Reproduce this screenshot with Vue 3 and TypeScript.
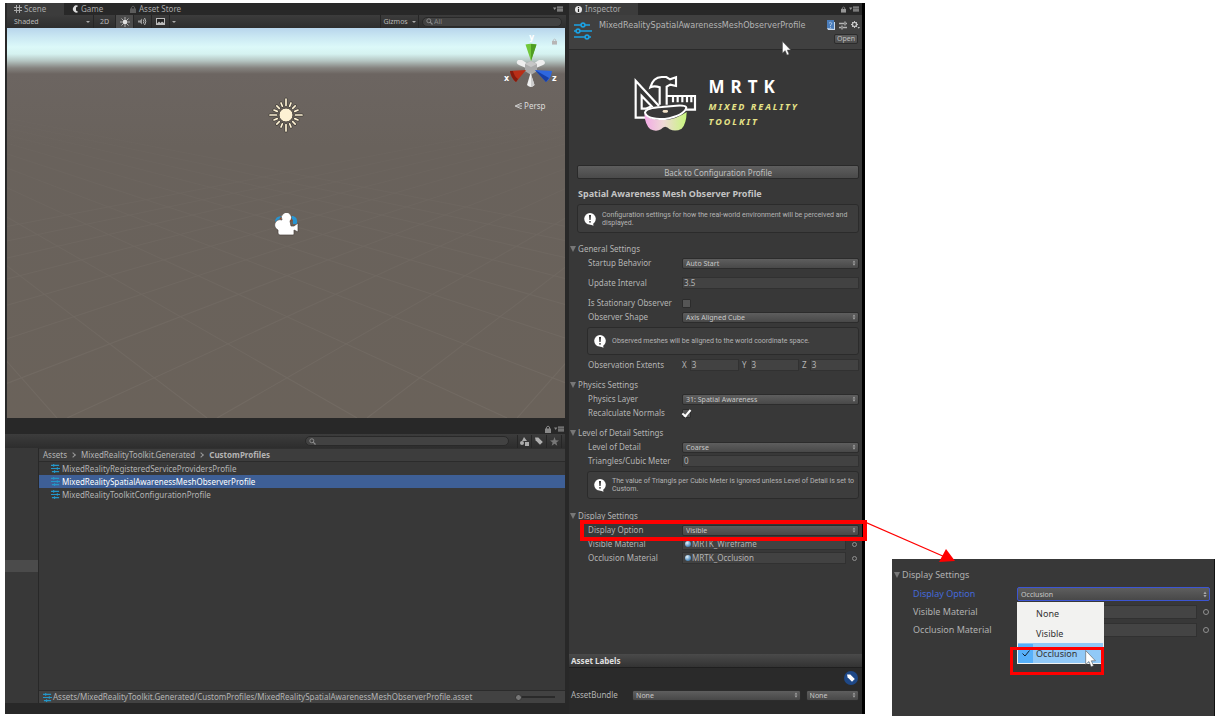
<script setup lang="ts">
import { ref } from 'vue'

const assets = [
  'MixedRealityRegisteredServiceProvidersProfile',
  'MixedRealitySpatialAwarenessMeshObserverProfile',
  'MixedRealityToolkitConfigurationProfile'
]
const selectedAsset = ref(1)
const displayOptions = ['None', 'Visible', 'Occlusion']
const displayOption = ref('Visible')
const popupOption = ref('Occlusion')
const axes = ['X', 'Y', 'Z']

interface Line { x1: number; y1: number; x2: number; y2: number }
const gridLines: Line[] = []
for (let i = 0; i < 12; i++) {
  gridLines.push({ x1: -260, y1: 40, x2: -100 + i * 150, y2: 390 })
  gridLines.push({ x1: 820, y1: 40, x2: 660 - i * 150, y2: 390 })
}
const rays = Array.from({ length: 16 }, (_, i) => ({ angle: i * 22.5, end: i % 4 === 0 ? 16 : 13 }))
</script>

<template>
  <div class="page">
    <svg class="defs" aria-hidden="true">
      <symbol id="profile" viewBox="0 0 18 18">
        <g fill="none" stroke="#1ba1e2" stroke-width="1.6">
          <path d="M0 3H7M11 3H16M0 9H2M6 9H18M0 15H11M15 15H17" />
          <circle cx="9" cy="3" r="1.9" /><circle cx="4" cy="9" r="1.9" /><circle cx="13" cy="15" r="1.9" />
        </g>
      </symbol>
      <symbol id="sliders" viewBox="0 0 10 10">
        <path d="M0 1.5H9M0 5H10M1 8.5H9M3 0V3M7 3.5V6.5M4 7V10" stroke="#2497c9" stroke-width="1.2" />
      </symbol>
      <symbol id="updown" viewBox="0 0 4 8">
        <path d="M2 .5L3.8 3.3H.2ZM2 7.5L3.8 4.7H.2Z" fill="#a8a8a8" />
      </symbol>
      <symbol id="lock" viewBox="0 0 6 8">
        <path d="M1.5 4V2.2Q3 0 4.5 2V4" fill="none" stroke="currentColor" />
        <path d="M0 3.5H6V8H0Z" fill="currentColor" />
      </symbol>
      <symbol id="panemenu" viewBox="0 0 10 6">
        <path d="M0 1.5H3.4L1.7 4ZM4 .5H10V1.8H4ZM4 2.4H10V3.7H4ZM4 4.3H10V5.6H4Z" fill="currentColor" />
      </symbol>
      <symbol id="note" viewBox="0 0 14 14">
        <path d="M6 12L10.5 13.8 10 11Z" fill="#fff" />
        <circle cx="7" cy="6.8" r="5.8" fill="#fff" />
        <path d="M6 3H8L7.6 8H6.4Z" fill="#333" /><circle cx="7" cy="9.8" r=".9" fill="#333" />
      </symbol>
      <symbol id="pointer" viewBox="0 0 9 15">
        <path d="M.5 .5V12L3.2 9.6 5 14 7 13.2 5.2 9H8.6Z" fill="#fff" stroke="#555" stroke-width=".5" />
      </symbol>
      <symbol id="magnifier" viewBox="0 0 7 7">
        <circle cx="2.8" cy="2.8" r="2" fill="none" stroke="#8c8c8c" /><path d="M4.2 4.2L6.5 6.5" stroke="#8c8c8c" stroke-width="1.2" />
      </symbol>
      <symbol id="tag" viewBox="0 0 8 8">
        <path d="M0 .5L.6 3.2 5 7.8 7.8 5 3.3 .5Z" fill="currentColor" />
      </symbol>
    </svg>

    <main class="editor">
      <div class="left">
        <section class="scene">
          <nav class="tabs">
            <button class="tab active scene-tab"><svg width="8" height="8" viewBox="0 0 8 8"><path d="M2.5 0V8M5.5 0V8M0 2.5H8M0 5.5H8" stroke="#aaa" /></svg>Scene</button>
            <button class="tab game-tab"><svg width="7" height="8" viewBox="0 0 7 8"><path d="M6.2 1A3.4 3.6 0 1 0 6.2 7L4 5.4V2.6Z" fill="#ddd" /></svg>Game</button>
            <button class="tab"><svg class="dim" width="6" height="8"><use href="#lock" /></svg>Asset Store</button>
            <svg class="pane-menu" width="10" height="6"><use href="#panemenu" /></svg>
          </nav>
          <div class="toolbar">
            <button class="tool shade"><span>Shaded</span><i class="caret"></i></button>
            <button class="tool">2D</button>
            <button class="tool on" aria-label="Scene lighting"><svg width="10" height="10" viewBox="0 0 10 10"><circle cx="5" cy="5" r="2" fill="#fff" /><path d="M5 0V10M0 5H10M1.5 1.5L8.5 8.5M8.5 1.5L1.5 8.5" stroke="#ddd" stroke-width=".7" /></svg></button>
            <button class="tool" aria-label="Scene audio"><svg width="9" height="9" viewBox="0 0 9 9"><path d="M0 3.5H2L4 1.5V7.5L2 5.5H0Z" fill="#999" /><path d="M5.3 2.5Q6.5 4.5 5.3 6.5M6.6 1Q9 4.5 6.6 8" fill="none" stroke="#bbb" /></svg></button>
            <button class="tool" aria-label="Effects"><svg width="9" height="7" viewBox="0 0 9 7"><path d="M0 0H9V7H0Z" fill="#bbb" /><path d="M1 1H8V5L6 3.5 4.5 5 3 3.5 1 5.5Z" fill="#222" /></svg></button>
            <button class="tool slim" aria-label="Effects menu"><i class="caret"></i></button>
            <span class="grow"></span>
            <button class="tool gizmos">Gizmos<i class="caret"></i></button>
            <label class="search scene-search"><svg width="7" height="7"><use href="#magnifier" /></svg><input value="All" aria-label="Search scene" /></label>
          </div>
          <div class="viewport">
            <svg class="ground" viewBox="0 0 558 390" preserveAspectRatio="none">
              <defs><linearGradient id="fade" x1="0" y1="0" x2="0" y2="1"><stop offset=".12" stop-color="#000" /><stop offset=".5" stop-color="#888" /><stop offset="1" stop-color="#fff" /></linearGradient>
                <mask id="horizon"><rect width="558" height="390" fill="url(#fade)" /></mask></defs>
              <g mask="url(#horizon)" stroke="#a29b94" stroke-width="1" opacity=".14">
                <line v-for="(l, i) in gridLines" :key="i" :x1="l.x1" :y1="l.y1" :x2="l.x2" :y2="l.y2" />
              </g>
            </svg>
            <svg class="sun" width="36" height="38" viewBox="-18 -19 36 38">
              <g v-for="r in rays" :key="r.angle" :transform="`rotate(${r.angle})`">
                <path :d="`M0 -9.5V${-r.end}`" stroke="#3e3a34" stroke-width="3" stroke-linecap="round" />
                <path :d="`M0 -9.5V${-r.end}`" stroke="#fdf1d3" stroke-width="1.7" stroke-linecap="round" />
              </g>
              <circle r="7" fill="#fdf1d3" stroke="#47413a" />
            </svg>
            <svg class="camera" width="28" height="24" viewBox="0 0 28 24">
              <path d="M3 9Q3 3 10 3H21Q26 4 25 11H21V7H8Z" fill="#2795d2" />
              <path d="M8 5L12 8M20 6L17 9" stroke="#a5451b" stroke-width="2" />
              <path d="M10 7A5 5 0 1 1 18 8L19 13H22L26 10V19L22 17V21Q22 22 21 22H8Q6 22 6 20V17A5 5 0 1 1 10 7Z" fill="#fff" stroke="#4b443e" stroke-width=".7" />
            </svg>
            <div class="gizmo">
              <svg width="56" height="60" viewBox="0 0 56 60">
                <path d="M15 28Q12 31 16 33L23 36 25 32 19 28Z" fill="#eee" /><path d="M40 28Q44 31 40 33L33 36 30 32 36 28Z" fill="#eee" />
                <path d="M22 32L28 29 34 32V39L28 43 22 39Z" fill="#aaa" /><path d="M22 32L28 35 34 32 28 29Z" fill="#c6c6c6" />
                <path d="M22.5 12.5Q28 11 33.5 12.5L28 29Z" fill="#72c83a" /><path d="M28 12V29L33.5 12.5Z" fill="#4f9d22" />
                <path d="M7 39L23 38 13 50Q8 46 7 39Z" fill="#b92e17" /><path d="M7 39Q8 46 13 50L15 47Q11 44 10 39Z" fill="#861b0d" />
                <path d="M32 38L49 39Q48 47 43 50Z" fill="#2e67df" /><path d="M32 38L46 46 43 50Z" fill="#173fa7" />
                <path d="M27.5 41L24 53Q28 57 31.5 53Z" fill="#eee" /><path d="M28 42V55L31.5 53Z" fill="#ccc" />
                <text x="26" y="8">y</text><text x="1" y="49">x</text><text x="49" y="49">z</text>
              </svg>
              <button class="persp"><svg width="7" height="6" viewBox="0 0 7 6"><path d="M7 0L0 3 7 6M1 3H7" fill="none" stroke="#ccc" /></svg>Persp</button>
            </div>
            <svg class="view-lock" width="5" height="7" viewBox="0 0 6 8"><use href="#lock" /></svg>
          </div>
        </section>

        <section class="project">
          <div class="pane-icons">
            <svg width="6" height="8"><use href="#lock" /></svg><svg width="10" height="6"><use href="#panemenu" /></svg>
          </div>
          <div class="toolbar project-toolbar">
            <span class="grow"></span>
            <label class="search project-search"><svg width="7" height="7"><use href="#magnifier" /></svg><input aria-label="Search project" /></label>
            <button class="tool first" aria-label="Search by type"><svg width="9" height="9" viewBox="0 0 9 9"><path d="M4 0L7 4H2Z" fill="#aaa" /><circle cx="2" cy="6" r="2" fill="#aaa" /><path d="M5 5H9V9H5Z" fill="#aaa" /></svg></button>
            <button class="tool" aria-label="Search by label"><svg class="lite" width="8" height="8"><use href="#tag" /></svg></button>
            <button class="tool" aria-label="Favorites"><svg width="9" height="9" viewBox="0 0 10 10"><path d="M5 0L6.3 3.6 10 3.8 7.1 6 8.1 9.7 5 7.6 1.9 9.7 2.9 6 0 3.8 3.7 3.6Z" fill="#777" /></svg></button>
          </div>
          <div class="project-body">
            <aside class="tree"><div class="tree-selected"></div></aside>
            <div class="files">
              <nav class="crumbs"><a href="#">Assets</a><span class="chev"></span><a href="#">MixedRealityToolkit.Generated</a><span class="chev"></span><b>CustomProfiles</b></nav>
              <ul class="assets">
                <li v-for="(a, i) in assets" :key="a"><button :class="{ selected: i === selectedAsset }" @click="selectedAsset = i"><svg width="9" height="9"><use href="#sliders" /></svg>{{ a }}</button></li>
              </ul>
              <footer class="path">
                <svg width="9" height="9"><use href="#sliders" /></svg>
                <span>Assets/MixedRealityToolkit.Generated/CustomProfiles/MixedRealitySpatialAwarenessMeshObserverProfile.asset</span>
                <input type="range" min="0" max="100" value="0" aria-label="Icon size" />
              </footer>
            </div>
          </div>
        </section>
      </div>

      <section class="inspector">
        <nav class="tabs">
          <button class="tab active insp-tab"><svg width="7" height="7" viewBox="0 0 7 7"><circle cx="3.5" cy="3.5" r="3.5" fill="#e8e8e8" /><path d="M3.5 1V2.2M3.5 3V6" stroke="#222" stroke-width="1.2" /></svg>Inspector</button>
          <span class="grow"></span>
          <svg width="5" height="7" viewBox="0 0 6 8"><use href="#lock" /></svg><svg width="10" height="6"><use href="#panemenu" /></svg>
        </nav>
        <header class="head">
          <svg class="head-icon" width="18" height="20"><use href="#profile" /></svg>
          <h1>MixedRealitySpatialAwarenessMeshObserverProfile</h1>
          <div class="head-side">
            <div class="head-icons">
              <svg width="9" height="10" viewBox="0 0 9 10"><path d="M1 0H8V9H2L1 8Z" fill="#4a7dbb" /><path d="M1 8L2 10H9V2H8V9Z" fill="#c8d8ea" /><path d="M3 3.2Q4.5 1.5 5.8 3.2Q5.8 4.4 4.5 5V6M4.5 6.8V7.8" fill="none" stroke="#c5d8ee" stroke-width=".8" /></svg>
              <svg width="8" height="9" viewBox="0 0 8 9"><path d="M0 2.5H5M7 2.5H8M0 6.5H2M4 6.5H8M6 .5V4.5M3 4.5V8.5" stroke="#b5b5b5" stroke-width="1.3" /></svg>
              <svg width="9" height="8" viewBox="0 0 9 8"><circle cx="3.5" cy="3.5" r="2.1" fill="none" stroke="#c4c4c4" stroke-width="1.4" /><path d="M3.5 0V1.5M3.5 5.5V7M0 3.5H1.5M5.5 3.5H7M1 1L2 2M5 5L6 6M6 1L5 2M2 5L1 6" stroke="#c4c4c4" /><path d="M6.5 6H9L7.7 7.8Z" fill="#c4c4c4" /></svg>
            </div>
            <button class="open">Open</button>
          </div>
          <svg class="pointer-main" width="9" height="15"><use href="#pointer" /></svg>
        </header>

        <div class="brand">
          <svg width="64" height="58" viewBox="220 222 192 174">
            <defs><linearGradient id="goggle"><stop offset="0" stop-color="#f3a9e6" /><stop offset=".45" stop-color="#efd9d6" /><stop offset="1" stop-color="#c8f77c" /></linearGradient></defs>
            <g fill="none" stroke="#fff" stroke-width="6.5">
              <path d="M258 353H228V242L298 318M246 288V326H258L276 319Z" />
              <path d="M300 314V262Q284 256 272 262Q280 232 306 231H320L331 238 349 232V258L332 254 321 260V314" />
              <path d="M321 288H406V329H378M340 291V307M354 291V307M368 291V307M382 291V307M395 291V307" />
            </g>
            <path d="M254 342Q256 374 272 388Q290 396 304 388Q316 372 330 388Q348 396 366 386Q380 372 381 336Q350 358 316 360Q270 360 254 342Z" fill="url(#goggle)" />
            <path d="M256 338Q258 324 306 321L350 317Q378 315 380 323Q374 346 316 357Q262 358 256 338Z" fill="#383838" stroke="#fff" stroke-width="6" />
            <rect x="309" y="330" width="16" height="8" rx="4" fill="#f3e3c8" />
          </svg>
          <div class="brand-text"><strong>MRTK</strong><em>MIXED REALITY</em><em>TOOLKIT</em></div>
        </div>

        <div class="body">
          <button class="back">Back to Configuration Profile</button>
          <h2>Spatial Awareness Mesh Observer Profile</h2>
          <p class="help"><svg width="14" height="14"><use href="#note" /></svg>Configuration settings for how the real-world environment will be perceived and displayed.</p>

          <h3 class="first-section"><i class="fold"></i>General Settings</h3>
          <div class="row"><label for="startup">Startup Behavior</label><span class="pick"><select id="startup"><option>Auto Start</option></select><svg width="4" height="6"><use href="#updown" /></svg></span></div>
          <div class="row spaced"><label for="interval">Update Interval</label><input id="interval" class="field" value="3.5" /></div>
          <div class="row spaced"><label for="stationary">Is Stationary Observer</label><input id="stationary" type="checkbox" /></div>
          <div class="row"><label for="shape">Observer Shape</label><span class="pick"><select id="shape"><option>Axis Aligned Cube</option></select><svg width="4" height="6"><use href="#updown" /></svg></span></div>
          <p class="help inner"><svg width="14" height="14"><use href="#note" /></svg>Observed meshes will be aligned to the world coordinate space.</p>
          <div class="row"><span>Observation Extents</span>
            <div class="vector"><label v-for="a in axes" :key="a">{{ a }}<input class="field" value="3" /></label></div>
          </div>

          <h3><i class="fold"></i>Physics Settings</h3>
          <div class="row"><label for="layer">Physics Layer</label><span class="pick"><select id="layer"><option>31: Spatial Awareness</option></select><svg width="4" height="6"><use href="#updown" /></svg></span></div>
          <div class="row"><label for="normals">Recalculate Normals</label><input id="normals" type="checkbox" checked /></div>

          <h3><i class="fold"></i>Level of Detail Settings</h3>
          <div class="row"><label for="lod">Level of Detail</label><span class="pick"><select id="lod"><option>Coarse</option></select><svg width="4" height="6"><use href="#updown" /></svg></span></div>
          <div class="row"><label for="tris">Triangles/Cubic Meter</label><input id="tris" class="field" value="0" /></div>
          <p class="help inner"><svg width="14" height="14"><use href="#note" /></svg>The value of Triangls per Cubic Meter is ignored unless Level of Detail is set to Custom.</p>

          <h3><i class="fold"></i>Display Settings</h3>
          <div class="row marked"><label for="display">Display Option</label><span class="pick"><select id="display" v-model="displayOption"><option v-for="o in displayOptions" :key="o">{{ o }}</option></select><svg width="4" height="6"><use href="#updown" /></svg></span></div>
          <div class="row"><label for="vis">Visible Material</label><div class="object"><i class="ball"></i><input id="vis" class="field" value="MRTK_Wireframe" /><button class="ring" aria-label="Select visible material"></button></div></div>
          <div class="row"><label for="occ">Occlusion Material</label><div class="object"><i class="ball"></i><input id="occ" class="field" value="MRTK_Occlusion" /><button class="ring" aria-label="Select occlusion material"></button></div></div>
        </div>

        <footer class="labels">
          <h2>Asset Labels</h2>
          <div class="tag-row"><button class="tag-button" aria-label="Add label"><svg width="8" height="8"><use href="#tag" /></svg></button></div>
          <div class="bundle"><label for="bundle">AssetBundle</label>
            <span class="pick wide"><select id="bundle"><option>None</option></select><svg width="4" height="6"><use href="#updown" /></svg></span>
            <span class="pick"><select aria-label="AssetBundle variant"><option>None</option></select><svg width="4" height="6"><use href="#updown" /></svg></span>
          </div>
        </footer>
      </section>
    </main>

    <aside class="detail">
      <svg class="arrow" width="92" height="42" viewBox="0 0 92 42"><path d="M0 1L80 36" stroke="#f00" stroke-width="1.2" /><path d="M90 40L74 41 81 28Z" fill="#f00" /></svg>
      <h3><i class="fold"></i>Display Settings</h3>
      <div class="drow current"><label for="popup">Display Option</label>
        <div class="pick"><select id="popup" v-model="popupOption"><option v-for="o in displayOptions" :key="o">{{ o }}</option></select><svg width="4" height="7"><use href="#updown" /></svg>
          <ul class="menu">
            <li v-for="o in displayOptions" :key="o"><button :class="{ chosen: o === popupOption }" @click="popupOption = o"><span class="tick"><svg v-if="o === popupOption" width="8" height="7" viewBox="0 0 8 7"><path d="M.5 3.5L3 6 7.5 .5" fill="none" stroke="#123" /></svg></span>{{ o }}</button></li>
          </ul>
          <div class="marker"></div>
          <svg class="pointer-menu" width="11" height="18" viewBox="0 0 9 15"><use href="#pointer" /></svg>
        </div>
      </div>
      <div class="drow"><label for="dvis">Visible Material</label><div class="object"><input id="dvis" class="field" /><button class="ring" aria-label="Select visible material"></button></div></div>
      <div class="drow"><label for="docc">Occlusion Material</label><div class="object"><input id="docc" class="field" /><button class="ring" aria-label="Select occlusion material"></button></div></div>
    </aside>
  </div>
</template>

<style>
body { margin: 0; background: #fff; }
</style>

<style scoped>
* { box-sizing: border-box; }
.page { display: flex; gap: 27px; min-height: 100vh; padding: 3px 3px 4px 5px; font: 8px/12px "Noto Sans", sans-serif; color: #b4b4b4; background: #fff; }
.defs { position: absolute; width: 0; height: 0; }
svg { display: block; flex: none; }
button, input, select { font: inherit; color: inherit; margin: 0; padding: 0; border: 0; background: none; min-width: 0; border-radius: 0; outline: 0; }
a { color: inherit; text-decoration: none; }
h1, h2, h3, p, ul { margin: 0; padding: 0; font-size: inherit; font-weight: 400; list-style: none; }
.grow { flex: 1; }

.editor { flex: 860 1 0; min-width: 0; display: flex; gap: 3px; margin-bottom: 2px; background: #282828; border-right: 3px solid #000; }
.left { flex: 561 1 0; min-width: 0; display: flex; flex-direction: column; }
.inspector { flex: 293 1 0; min-width: 0; display: flex; flex-direction: column; background: #383838; }

.tabs { display: flex; align-items: center; height: 12px; background: #282828; color: #969696; padding-right: 3px; gap: 0; }
.tab { display: flex; align-items: center; gap: 3px; height: 12px; color: #a8a8a8; }
.tab.active { background: #3c3c3c; }
.scene-tab { width: 57px; margin-left: 2px; padding-left: 7px; gap: 2px; }
.game-tab { padding-left: 8px; gap: 2px; width: 66px; }
.insp-tab { width: 69px; padding-left: 6px; }
.insp-tab + .grow + svg { margin-right: 3px; }
.pane-menu { margin-left: auto; }
.dim { color: #5c5c5c; }
.lite { color: #b0b0b0; }

.toolbar { display: flex; align-items: center; height: 13px; margin-left: 2px; font-size: 7px; background: linear-gradient(#3c3c3c, #2d2d2d); color: #b8b8b8; }
.tool { display: flex; align-items: center; justify-content: center; width: 18px; height: 13px; border-right: 1px solid #262626; }
.tool.on { background: #4c4c4c; }
.tool.slim { width: 8px; border-right: 0; }
.shade { width: 87px; justify-content: space-between; padding: 0 3px 0 7px; }
.shade + .tool { width: 22px; }
.gizmos { width: 39px; gap: 4px; border-left: 1px solid #262626; }
.caret { border: 2px solid transparent; border-top-color: #aaa; border-bottom: 0; }
.search { display: flex; align-items: center; gap: 1px; height: 10px; padding: 0 3px; border: 1px solid #292929; border-radius: 5px; background: #424242; }
.search input { flex: 1; height: 8px; color: #888; }
.scene-search { width: 140px; margin: 0 4px 0 3px; }

.viewport { position: relative; flex: none; height: 390px; margin: 0 1px 0 2px; overflow: hidden; background: linear-gradient(#b8d5ec 0, #c8e6f2 8px, #dcf9f9 19px, #d5f2f0 26px, #b4c4c1 33px, #85837f 40px, #6c6561 46px, #69625c 120px, #6a625a 390px); }
.ground { position: absolute; inset: 0; width: 100%; height: 100%; }
.sun { position: absolute; left: 50%; top: 68px; margin-left: -18px; }
.camera { position: absolute; left: 50%; top: 185px; margin-left: -14px; }
.gizmo { position: absolute; right: 6px; top: 4px; width: 56px; }
.gizmo text { font: bold 8px "DejaVu Sans", sans-serif; fill: #fff; }
.persp { display: flex; align-items: center; gap: 2px; margin: 8px 0 0 12px; color: #ddd; }
.view-lock { position: absolute; right: 8px; top: 10px; color: #b7b5b5; }

.project { flex: 1; display: flex; flex-direction: column; padding-bottom: 11px; }
.pane-icons { display: flex; align-items: center; justify-content: flex-end; gap: 3px; height: 16px; padding: 6px 2px 0 0; color: #888; }
.project-toolbar { height: 14px; margin: 0 1px 0 0; }
.project-toolbar .tool { width: 15px; }
.project-toolbar .tool.first { border-left: 1px solid #262626; }
.project-toolbar .tool:last-child { margin-right: 3px; }
.project-search { width: 204px; margin-right: 8px; }
.project-body { flex: 1; display: flex; margin-right: 1px; }
.tree { width: 33px; padding-top: 112px; background: #383838; }
.tree-selected { height: 12px; background: #4b4b4b; }
.files { flex: 1; display: flex; flex-direction: column; margin-left: 1px; background: #383838; }
.crumbs { display: flex; align-items: center; height: 14px; padding-left: 4px; border-top: 1px solid #303030; border-bottom: 1px solid #2b2b2b; background: #3d3d3d; }
.chev { width: 4px; height: 4px; margin: 0 6px 0 4px; border: solid #999; border-width: 1px 1px 0 0; transform: rotate(45deg); }
.assets button { display: flex; align-items: center; gap: 2px; width: 100%; height: 13px; padding-left: 12px; text-align: left; }
.assets button.selected { background: #3e5f96; color: #fff; }
.path { display: flex; align-items: center; gap: 1px; height: 13px; margin-top: auto; padding: 0 10px 0 4px; border-top: 1px solid #2b2b2b; background: #424242; }
.path span { flex: 1; white-space: nowrap; }
.path input { width: 40px; height: 8px; appearance: none; background: linear-gradient(#2a2a2a, #2a2a2a) center / 100% 2px no-repeat; }
.path input::-webkit-slider-thumb { appearance: none; width: 7px; height: 7px; border: 1px solid #333; border-radius: 50%; background: #777; }

.head { position: relative; display: flex; height: 35px; padding: 5px 4px 0 5px; background: #404040; border-bottom: 1px solid #2a2a2a; }
.head h1 { flex: 1; margin-left: 7px; font: 9px/11px "DejaVu Sans Condensed", "DejaVu Sans", sans-serif; color: #b4b4b4; white-space: nowrap; }
.head-icon { margin-top: 1px; }
.head-side { display: flex; flex-direction: column; align-items: flex-end; gap: 4px; }
.head-icons { display: flex; align-items: center; gap: 4px; height: 10px; margin-right: -2px; }
.open { width: 24px; height: 10px; font-size: 7px; line-height: 8px; border: 1px solid #2c2c2c; border-radius: 2px; background: linear-gradient(#5c5c5c, #4c4c4c); color: #c0c0c0; }
.pointer-main { position: absolute; right: 71px; top: 26px; }

.brand { display: flex; gap: 12px; justify-content: center; height: 110px; padding: 24px 0 0 4px; background: #373737; }
.brand-text { display: flex; flex-direction: column; width: 94px; padding-top: 4px; }
.brand strong { font: bold 17px/18px "Noto Sans", sans-serif; letter-spacing: 6px; color: #fff; }
.brand em { font: italic bold 9px/15px "Noto Sans", sans-serif; letter-spacing: 2px; white-space: nowrap; color: #e6e388; }
.brand strong + em { margin-top: 3px; }

.body { padding: 5px 3px 0 0; }
.back { display: block; width: calc(100% - 8px); height: 14px; margin-left: 8px; line-height: 11px; border: 1px solid #2a2a2a; border-radius: 2px; background: linear-gradient(#5e5e5e, #4a4a4a); color: #c0c0c0; }
.body h2 { margin: 9px 0 4px 9px; font: bold 9px/12px "Noto Sans", sans-serif; color: #c4c4c4; }
.help { display: flex; align-items: center; gap: 5px; min-height: 29px; margin-left: 8px; padding: 0 2px 0 5px; font: 7px/8px Roboto, sans-serif; border: 1px solid #2b2b2b; border-radius: 3px; background: #3d3d3d; color: #b4b4b4; }
.help.inner { margin: 3px 0 3px 18px; min-height: 28px; }
.body h3, .detail h3 { display: flex; align-items: center; gap: 2px; height: 14px; margin-top: 6px; padding-left: 1px; }
.body h3.first-section { margin-top: 9px; }
.help.inner + h3 { margin-top: 10px; }
.fold { border: 3px solid transparent; border-top: 6px solid #777; border-bottom: 0; }
.row { display: grid; grid-template-columns: 94px 1fr; align-items: center; height: 14px; padding-left: 19px; }
.row.spaced { margin-top: 6px; }
.pick { position: relative; display: flex; }
.pick select { width: 100%; height: 11px; padding: 0 10px 0 3px; font-size: 7px; line-height: 9px; appearance: none; border: 1px solid #2c2c2c; border-radius: 2px; background: linear-gradient(#5e5e5e, #484848); color: #c8c8c8; }
.pick option { background: #fff; color: #222; }
.pick > select + svg { position: absolute; right: 3px; top: 50%; margin-top: -3px; pointer-events: none; }
.field { width: 100%; height: 12px; padding: 0 2px; line-height: 12px; box-shadow: inset 0 0 0 1px #313131; background: #424242; }
input[type="checkbox"] { appearance: none; width: 9px; height: 9px; border: 1px solid #2c2c2c; border-radius: 1px; background: #555; display: grid; place-items: center; }
input[type="checkbox"]:checked::before { content: ""; width: 3px; height: 7px; margin-top: -2px; border: solid #fff; border-width: 0 2px 2px 0; transform: rotate(40deg); }
.vector { display: flex; gap: 3px; }
.vector label { flex: 1; display: flex; align-items: center; gap: 3px; }
.object { position: relative; display: flex; align-items: center; gap: 6px; }
.object .field { flex: 1; padding-left: 10px; }
.ball { position: absolute; left: 3px; width: 6px; height: 6px; border-radius: 50%; background: radial-gradient(circle at 35% 30%, #e8f4fc, #5b95c4 60%, #2d5980); }
.ring { width: 5px; height: 5px; margin-right: 2px; border: 1px solid #909090; border-radius: 50%; }
.marked { position: relative; }
.marked::after { content: ""; position: absolute; inset: -3px -8px -4px 11px; border: 4px solid #f00; z-index: 1; pointer-events: none; }

.labels { height: 60px; margin-top: auto; background: #2a2a2a; }
.labels h2 { height: 14px; padding-left: 2px; font-weight: 700; line-height: 13px; color: #e0e0e0; border-bottom: 1px solid #1f1f1f; background: linear-gradient(#4a4a4a, #333); }
.tag-row { display: flex; justify-content: flex-end; padding: 3px 4px 3px 0; }
.tag-button { display: grid; place-items: center; width: 14px; height: 14px; border-radius: 50%; background: #1e4887; color: #fff; }
.bundle { display: flex; align-items: center; height: 14px; padding: 0 3px 0 2px; gap: 5px; }
.bundle label { width: 56px; }
.bundle .pick { flex: 54; }
.bundle .pick.wide { flex: 170; }

.detail { position: relative; flex: 323 1 0; min-width: 0; align-self: flex-end; height: 157px; padding-top: 9px; font-size: 9px; line-height: 12px; background: #383838; border-right: 1px solid #111; color: #b0b0b0; }
.detail h3 { margin: 0 0 3px; padding-left: 2px; }
.drow { display: grid; grid-template-columns: 104px 1fr; align-items: center; height: 18px; padding: 0 4px 0 21px; }
.current label { color: #4468d8; }
.detail .pick select { height: 14px; font-size: 7px; border: 1px solid #3c55d4; }
.detail .field { height: 14px; background: #444; }
.detail .object { gap: 6px; }
.detail .ring { width: 6px; height: 6px; margin-right: 1px; }
.menu { position: absolute; left: 0; top: 15px; width: 87px; padding: 1px; background: #f2f2f0; z-index: 1; color: #333; }
.menu button { display: flex; align-items: center; gap: 3px; width: 100%; height: 20px; padding-top: 1px; text-align: left; }
.tick { display: grid; place-items: center; width: 15px; height: 19px; }
.chosen { background: #91c9f7; }
.chosen .tick { background: #56b0fa; }
.marker { position: absolute; left: -7px; top: 60px; width: 94px; height: 28px; border: 3px solid #f00; z-index: 2; pointer-events: none; }
.pointer-menu { position: absolute; left: 68px; top: 63px; z-index: 3; pointer-events: none; }
.arrow { position: absolute; left: -27px; top: -38px; }
</style>
